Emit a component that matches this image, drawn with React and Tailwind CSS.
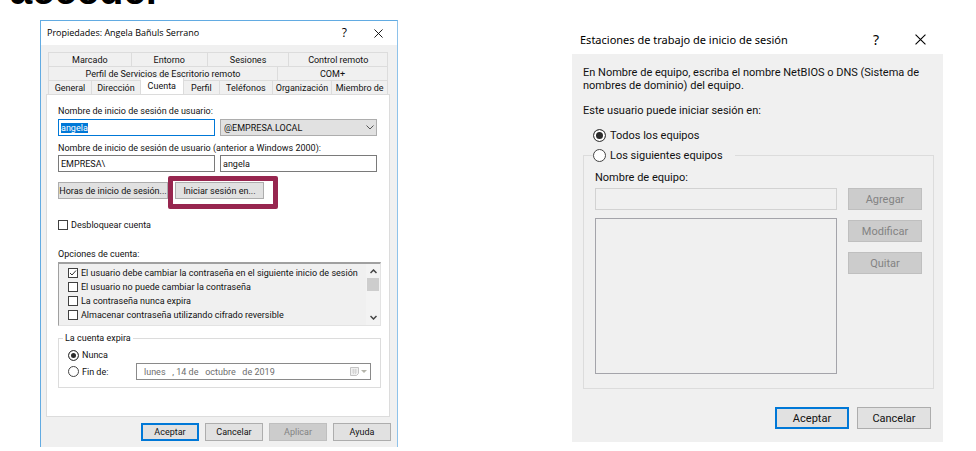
import { useEffect, useRef } from "react";

const small = "font-['Roboto','Liberation_Sans',sans-serif] text-[9px] leading-3";
const large = "font-['Roboto','Liberation_Sans',sans-serif] text-[11px] leading-[13px]";

function Check({ label, checked }) {
  return (
    <label className="flex w-fit items-center gap-[3px]">
      <span className="relative flex size-[10px]">
        <input
          type="checkbox"
          defaultChecked={checked}
          className="peer size-[10px] appearance-none border border-[#404040] bg-white"
        />
        <svg
          viewBox="0 0 10 10"
          className="pointer-events-none absolute inset-0 hidden size-[10px] fill-none stroke-[#333] peer-checked:block"
        >
          <path d="M2 5l2 2 4-4.5" />
        </svg>
      </span>
      {label}
    </label>
  );
}

function Radio({ name, label, checked, big }) {
  return (
    <label className={big ? "flex w-fit items-center gap-[4px]" : "flex w-fit items-center gap-[3px]"}>
      <input
        type="radio"
        name={name}
        defaultChecked={checked}
        className={
          (big ? "size-[13px] " : "size-[11px] ") +
          "appearance-none rounded-full border border-[#444] bg-white bg-clip-border checked:shadow-[inset_0_0_0_2px_white] checked:bg-[#2b2b2b]"
        }
      />
      {label}
    </label>
  );
}

function Tab({ children, className, selected }) {
  return (
    <button
      type="button"
      role="tab"
      aria-selected={!!selected}
      className={
        (selected ? "-mt-[2px] h-[16px] bg-white pb-[1px] " : "h-[14px] border-t bg-[#f0f0f0] ") +
        "flex items-center justify-center border-r border-[#dcdcdc] whitespace-nowrap " +
        className
      }
    >
      {children}
    </button>
  );
}

function Button({ children, className, primary, disabled }) {
  const look = disabled
    ? "border border-[#bfbfbf] bg-[#cccccc] text-[#838383]"
    : primary
      ? "border-2 border-[#0078d7] bg-[#e1e1e1]"
      : "border border-[#adadad] bg-[#e1e1e1]";
  return (
    <button
      type="button"
      disabled={disabled}
      className={"flex items-center justify-center whitespace-nowrap " + look + " " + className}
    >
      {children}
    </button>
  );
}

function TitleBar({ title, big }) {
  return (
    <div
      className={
        "flex items-center bg-white text-black " +
        (big
          ? "h-[30px] pr-[17px] pl-[8px] font-['Noto_Sans','Open_Sans',sans-serif] text-[11px]"
          : "h-[24px] pr-[14px] pl-[6px] font-['Open_Sans','Noto_Sans',sans-serif] text-[9px]")
      }
    >
      <h2 className="flex-1">{title}</h2>
      <button type="button" aria-label="Ayuda" className={big ? "mr-[36px] text-[14px]" : "mr-[27px] text-[12px]"}>
        ?
      </button>
      <button type="button" aria-label="Cerrar">
        <svg
          viewBox="0 0 10 10"
          className={"fill-none stroke-black " + (big ? "size-[11px]" : "size-[9px]")}
        >
          <path d="M0.5 0.5l9 9M9.5 0.5l-9 9" />
        </svg>
      </button>
    </div>
  );
}

function AccountDialog() {
  const login = useRef(null);
  useEffect(() => {
    login.current.focus();
    login.current.select();
  }, []);
  const field = "h-[17px] min-w-0 border bg-white px-[2px] outline-none ";
  return (
    <section
      className={
        "mt-[10px] w-full max-w-[358px] border-x border-t border-[#62abe2] border-r-[#8ec2ea] bg-[#f0f0f0] pb-[6px] text-[#111] " +
        small
      }
    >
      <TitleBar title="Propiedades: Angela Bañuls Serrano" />
      <div className="pt-[7px] pr-[7px] pl-[5px]">
        <div role="tablist" className="mx-[2px] border-l border-[#dcdcdc]">
          <div className="flex">
            <Tab className="flex-[83]">Marcado</Tab>
            <Tab className="flex-[76]">Entorno</Tab>
            <Tab className="flex-[82]">Sesiones</Tab>
            <Tab className="flex-[99]">Control remoto</Tab>
          </div>
          <div className="flex">
            <Tab className="flex-[230]">Perfil de Servicios de Escritorio remoto</Tab>
            <Tab className="flex-[110]">COM+</Tab>
          </div>
          <div className="flex">
            <Tab className="flex-[43]">General</Tab>
            <Tab className="flex-[49]">Dirección</Tab>
            <Tab className="flex-[43]" selected>
              Cuenta
            </Tab>
            <Tab className="flex-[36]">Perfil</Tab>
            <Tab className="flex-[53]">Teléfonos</Tab>
            <Tab className="flex-[60]">Organización</Tab>
            <Tab className="flex-[56]">Miembro de</Tab>
          </div>
        </div>
        <div className="border border-[#dcdcdc] bg-white px-[11px] pt-[10px] pb-[28px]">
          <label htmlFor="login" className="block">
            Nombre de inicio de sesión de usuario:
          </label>
          <div className="mt-[2px] grid grid-cols-2 gap-[5px] pr-[1px]">
            <input
              id="login"
              ref={login}
              defaultValue="angela"
              className={field + "border-[#0078d7] selection:bg-[#0078d7] selection:text-white"}
            />
            <div className="relative flex">
              <select
                aria-label="Dominio"
                className="h-[17px] w-full appearance-none border border-[#adadad] bg-[#e1e1e1] px-[3px]"
              >
                <option>@EMPRESA.LOCAL</option>
              </select>
              <svg
                viewBox="0 0 8 5"
                className="pointer-events-none absolute top-[6px] right-[3px] h-[5px] w-[8px] fill-none stroke-[#555]"
              >
                <path d="M0.5 0.5L4 4l3.500-3.500" />
              </svg>
            </div>
          </div>
          <label htmlFor="netbios" className="mt-[6px] block">
            Nombre de inicio de sesión de usuario (anterior a Windows 2000):
          </label>
          <div className="mt-[1px] grid grid-cols-2 gap-[5px] pr-[1px]">
            <input id="netbios" defaultValue="EMPRESA\" className={field + "border-[#7a7a7a]"} />
            <input aria-label="Usuario" defaultValue="angela" className={field + "border-[#7a7a7a]"} />
          </div>
          <div className="mt-[4px] flex">
            <Button className="mt-[6px] h-[17px] w-[110px]">Horas de inicio de sesión...</Button>
            <div className="flex h-[33px] w-[110px] rounded-[2px] border-[5px] border-[#97264f] bg-white pt-[1px] pl-[2px]">
              <Button className="h-[17px] w-[89px]">Iniciar sesión en...</Button>
            </div>
          </div>
          <div className="mt-[10px]">
            <Check label="Desbloquear cuenta" />
          </div>
          <p className="mt-[17px]">Opciones de cuenta:</p>
          <div className="mt-[2px] mr-[-3px] flex h-[64px] justify-between border border-t-2 border-[#e3e3e3] border-t-[#a0a0a0] border-l-[#a0a0a0] bg-[#f0f0f0]">
            <div className="flex flex-col gap-[2px] pt-[3px] pl-[9px]">
              <Check checked label="El usuario debe cambiar la contraseña en el siguiente inicio de sesión" />
              <Check label="El usuario no puede cambiar la contraseña" />
              <Check label="La contraseña nunca expira" />
              <Check label="Almacenar contraseña utilizando cifrado reversible" />
            </div>
            <div className="flex w-[14px] flex-col items-center bg-[#f3f3f3] py-[5px]">
              <svg viewBox="0 0 7 5" className="h-[5px] w-[7px] fill-none stroke-[#444] stroke-[1.500]">
                <path d="M0.500 4l3-3 3 3" />
              </svg>
              <div className="mt-[4px] h-[13px] w-[12px] bg-[#cdcdcd]" />
              <svg viewBox="0 0 7 5" className="mt-auto h-[5px] w-[7px] fill-none stroke-[#444] stroke-[1.500]">
                <path d="M0.500 1l3 3 3-3" />
              </svg>
            </div>
          </div>
          <fieldset className="mt-[6px] mr-[-3px] border border-[#dcdcdc] pr-[9px] pb-[7px] pl-[9px]">
            <legend className="-ml-[5px] px-[2px]">La cuenta expira</legend>
            <div className="mt-[5px]">
              <Radio name="expira" checked label="Nunca" />
            </div>
            <div className="mt-[2px] flex items-center justify-between">
              <Radio name="expira" label="Fin de:" />
              <div className="flex h-[17px] w-[235px] items-center border border-[#8a8a8a] bg-white pr-[3px]">
                <input
                  aria-label="Fecha"
                  disabled
                  defaultValue="lunes   , 14 de   octubre   de 2019"
                  className="min-w-0 flex-1 pl-[7px] text-[#6d6d6d]"
                />
                <svg viewBox="0 0 17 10" className="h-[10px] w-[17px]">
                  <path d="M0.500 0.500h8v6l-2 2h-6z" fill="#f0f0f0" stroke="#c4c4c4" />
                  <path d="M2 3h5M2 5h5M3.500 2v5M5.500 2v5" stroke="#d6d6d6" fill="none" />
                  <path d="M11 3h6l-3 3z" fill="#b4b4aa" />
                </svg>
              </div>
            </div>
          </fieldset>
        </div>
      </div>
      <div className="mt-[6px] flex justify-end gap-[6px] pr-[6px]">
        <Button primary className="h-[18px] w-[58px]">Aceptar</Button>
        <Button className="h-[18px] w-[58px]">Cancelar</Button>
        <Button disabled className="h-[18px] w-[58px]">Aplicar</Button>
        <Button className="h-[18px] w-[58px]">Ayuda</Button>
      </div>
    </section>
  );
}

function WorkstationsDialog() {
  return (
    <section className={"mt-[14px] w-full max-w-[371px] text-[#111] " + large}>
      <TitleBar big title="Estaciones de trabajo de inicio de sesión" />
      <div className="bg-[#f0f0f0] px-[11px] pt-[12px] pb-[13px]">
        <p>En Nombre de equipo, escriba el nombre NetBIOS o DNS (Sistema de nombres de dominio) del equipo.</p>
        <p className="mt-[12px]">Este usuario puede iniciar sesión en:</p>
        <div className="mt-[12px] ml-[10px]">
          <Radio big name="equipos" checked label="Todos los equipos" />
        </div>
        <fieldset className="mt-[7px] -mr-[2px] border border-[#dcdcdc] px-[11px] pb-[14px]">
          <legend className="-ml-[2px] pr-[12px]">
            <Radio big name="equipos" label="Los siguientes equipos" />
          </legend>
          <label htmlFor="equipo" className="mt-[9px] block">
            Nombre de equipo:
          </label>
          <div className="mt-[4px] flex gap-[11px]">
            <div className="flex flex-1 flex-col gap-[8px]">
              <input id="equipo" disabled className="h-[22px] border border-[#d2d2d2] bg-[#f0f0f0]" />
              <div role="listbox" aria-label="Equipos" className="h-[156px] border border-[#a4a4aa] bg-[#f0f0f0]" />
            </div>
            <div className="flex w-[74px] flex-col gap-[10px]">
              <Button disabled className="h-[22px]">Agregar</Button>
              <Button disabled className="h-[22px]">Modificar</Button>
              <Button disabled className="h-[22px]">Quitar</Button>
            </div>
          </div>
        </fieldset>
        <div className="mt-[18px] flex justify-end gap-[8px] pr-[1px]">
          <Button primary className="h-[22px] w-[74px]">Aceptar</Button>
          <Button className="h-[22px] w-[74px]">Cancelar</Button>
        </div>
      </div>
    </section>
  );
}

export default function App() {
  return (
    <div className="bg-white">
      <header className="flex h-[10px] items-end overflow-hidden pl-[10px]">
        <h1 className="font-['Liberation_Sans',sans-serif] text-[40px] leading-none font-bold text-black">acceder</h1>
      </header>
      <main className="flex items-start justify-between gap-4 pr-[33px] pl-[40px]">
        <AccountDialog />
        <WorkstationsDialog />
      </main>
    </div>
  );
}
